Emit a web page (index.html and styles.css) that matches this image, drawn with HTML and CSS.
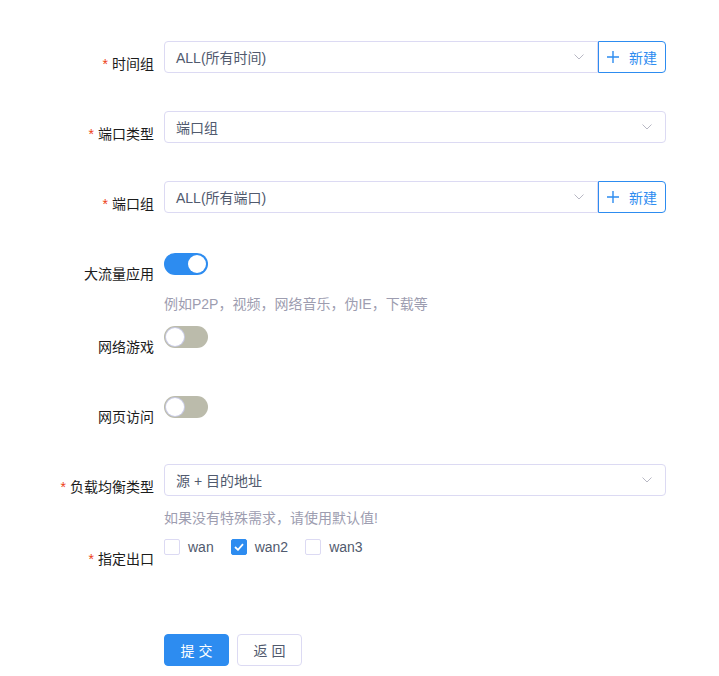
FILE: index.html
```html
<!DOCTYPE html>
<html lang="zh-CN">
<head>
    <meta charset="UTF-8">
    <meta name="viewport" content="width=device-width, initial-scale=1.0">
    <title>策略路由</title>
    <link rel="stylesheet" href="styles.css">
</head>
<body>
    <form class="form">
        <div class="f-item">
            <label class="f-label"><span class="req">*</span>时间组</label>
            <div class="f-content">
                <div class="group">
                    <div class="select joined">
                        <span>ALL(所有时间)</span>
                        <svg class="arrow" viewBox="0 0 10 6" width="10" height="6"><polyline points="0.5,0.5 5,5 9.5,0.5" fill="none" stroke="#b8b8c4" stroke-width="1"/></svg>
                    </div>
                    <button type="button" class="btn-new">
                        <svg viewBox="0 0 12 12" width="12" height="12"><path d="M6 0v12M0 6h12" stroke="#2d8cf0" stroke-width="1.4"/></svg>
                        新建
                    </button>
                </div>
            </div>
        </div>

        <div class="f-item">
            <label class="f-label"><span class="req">*</span>端口类型</label>
            <div class="f-content">
                <div class="select">
                    <span>端口组</span>
                    <svg class="arrow" viewBox="0 0 10 6" width="10" height="6"><polyline points="0.5,0.5 5,5 9.5,0.5" fill="none" stroke="#b8b8c4" stroke-width="1"/></svg>
                </div>
            </div>
        </div>

        <div class="f-item">
            <label class="f-label"><span class="req">*</span>端口组</label>
            <div class="f-content">
                <div class="group">
                    <div class="select joined">
                        <span>ALL(所有端口)</span>
                        <svg class="arrow" viewBox="0 0 10 6" width="10" height="6"><polyline points="0.5,0.5 5,5 9.5,0.5" fill="none" stroke="#b8b8c4" stroke-width="1"/></svg>
                    </div>
                    <button type="button" class="btn-new">
                        <svg viewBox="0 0 12 12" width="12" height="12"><path d="M6 0v12M0 6h12" stroke="#2d8cf0" stroke-width="1.4"/></svg>
                        新建
                    </button>
                </div>
            </div>
        </div>

        <div class="f-item with-tip">
            <label class="f-label">大流量应用</label>
            <div class="f-content">
                <div class="switch-line"><span class="switch on"></span></div>
                <div class="tip">例如P2P，视频，网络音乐，伪IE，下载等</div>
            </div>
        </div>

        <div class="f-item">
            <label class="f-label">网络游戏</label>
            <div class="f-content">
                <div class="switch-line"><span class="switch"></span></div>
            </div>
        </div>

        <div class="f-item">
            <label class="f-label">网页访问</label>
            <div class="f-content">
                <div class="switch-line"><span class="switch"></span></div>
            </div>
        </div>

        <div class="f-item with-tip tight">
            <label class="f-label"><span class="req">*</span>负载均衡类型</label>
            <div class="f-content">
                <div class="select">
                    <span>源 + 目的地址</span>
                    <svg class="arrow" viewBox="0 0 10 6" width="10" height="6"><polyline points="0.5,0.5 5,5 9.5,0.5" fill="none" stroke="#b8b8c4" stroke-width="1"/></svg>
                </div>
                <div class="tip">如果没有特殊需求，请使用默认值!</div>
            </div>
        </div>

        <div class="f-item last">
            <label class="f-label low"><span class="req">*</span>指定出口</label>
            <div class="f-content">
                <div class="checks">
                    <label class="check"><span class="box"></span>wan</label>
                    <label class="check"><span class="box checked"><svg viewBox="0 0 10 8" width="10" height="8"><polyline points="1,4 4,6.8 9,1.2" fill="none" stroke="#fff" stroke-width="1.8"/></svg></span>wan2</label>
                    <label class="check"><span class="box"></span>wan3</label>
                </div>
            </div>
        </div>

        <div class="actions">
            <button type="button" class="btn primary">提 交</button>
            <button type="button" class="btn">返 回</button>
        </div>
    </form>
</body>
</html>
```

FILE: styles.css
```css
body {
    margin: 0;
    background: #fff;
    font-family: "Liberation Sans", "Noto Sans CJK SC", sans-serif;
    font-size: 14px;
    color: #515a6e;
}
.form {
    width: 666px;
    padding-top: 41px;
}
.f-item {
    display: flex;
    align-items: flex-start;
    margin-bottom: 38px;
}
.f-item.with-tip {
    margin-bottom: 12px;
}
.f-item.tight {
    margin-bottom: 5px;
}
.f-item.last {
    margin-bottom: 71px;
}
.f-label {
    width: 164px;
    height: 32px;
    box-sizing: border-box;
    padding: 14px 10px 0 0;
    text-align: right;
    line-height: 18px;
    color: #1c1c1c;
    white-space: nowrap;
}
.f-label.low {
    padding-top: 19px;
}
.req {
    color: #ed4014;
    margin-right: 4px;
    font-family: "Liberation Sans", sans-serif;
}
.f-content {
    flex: 1;
}
.group {
    display: flex;
}
.select {
    flex: 1;
    height: 32px;
    box-sizing: border-box;
    border: 1px solid #dcdaf3;
    border-radius: 4px;
    display: flex;
    align-items: center;
    justify-content: space-between;
    padding: 0 13px 0 11px;
    color: #515a6e;
}
.select.joined {
    border-radius: 4px 0 0 4px;
}
.arrow {
    display: block;
}
.btn-new {
    width: 68px;
    height: 32px;
    border: 1px solid #2d8cf0;
    border-radius: 0 4px 4px 0;
    background: #fff;
    color: #2d8cf0;
    font: inherit;
    display: flex;
    align-items: center;
    gap: 10px;
    padding: 0 0 0 8px;
    cursor: pointer;
}
.switch-line {
    height: 32px;
    padding-top: 2px;
    box-sizing: border-box;
}
.switch {
    display: block;
    position: relative;
    width: 44px;
    height: 22px;
    border-radius: 11px;
    background: #bbbbab;
}
.switch::after {
    content: "";
    position: absolute;
    left: 2px;
    top: 2px;
    width: 18px;
    height: 18px;
    border-radius: 50%;
    background: #fff;
    box-shadow: 0 0 0 1px #c9cbe6;
}
.switch.on {
    background: #2d8cf0;
}
.switch.on::after {
    left: 24px;
    box-shadow: none;
}
.tip {
    margin-top: 13px;
    line-height: 16px;
    color: #9d9db0;
}
.with-tip.tight .tip {
    margin-top: 14px;
}
.checks {
    display: flex;
    align-items: center;
    height: 32px;
}
.check {
    display: flex;
    align-items: center;
    margin-right: 17px;
    color: #515a6e;
}
.box {
    width: 16px;
    height: 16px;
    box-sizing: border-box;
    border: 1px solid #dcdaf3;
    border-radius: 2px;
    margin-right: 8px;
    display: flex;
    align-items: center;
    justify-content: center;
}
.box.checked {
    background: #2d8cf0;
    border-color: #2d8cf0;
}
.actions {
    display: flex;
    gap: 8px;
    padding-left: 164px;
}
.btn {
    width: 65px;
    height: 32px;
    border: 1px solid #dcdaf3;
    border-radius: 4px;
    background: #fff;
    color: #515a6e;
    font: inherit;
    cursor: pointer;
}
.btn.primary {
    background: #2d8cf0;
    border-color: #2d8cf0;
    color: #fff;
}
```
